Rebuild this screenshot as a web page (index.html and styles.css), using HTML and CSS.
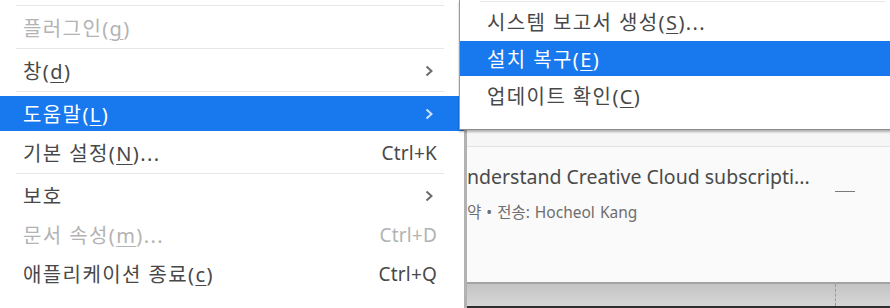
FILE: index.html
```html
<!DOCTYPE html>
<html lang="ko">
<head>
    <meta charset="UTF-8">
    <title>도움말 메뉴</title>
    <link rel="stylesheet" href="styles.css">
</head>
<body>

<!-- Main menu -->
<div class="menu">
    <div class="sep"></div>
    <div class="item disabled"><span>플러그인(<u>g</u>)</span></div>
    <div class="sep"></div>
    <div class="item">
        <span>창(<u>d</u>)</span>
        <svg class="chev" viewBox="0 0 8 12"><polyline points="1.5,1.5 6.5,6 1.5,10.5"/></svg>
    </div>
    <div class="sep"></div>
    <div class="item active">
        <span>도움말(<u>L</u>)</span>
        <svg class="chev" viewBox="0 0 8 12"><polyline points="1.5,1.5 6.5,6 1.5,10.5"/></svg>
    </div>
    <div class="item">
        <span>기본 설정(<u>N</u>)...</span>
        <span class="key">Ctrl+K</span>
    </div>
    <div class="sep"></div>
    <div class="item">
        <span>보호</span>
        <svg class="chev" viewBox="0 0 8 12"><polyline points="1.5,1.5 6.5,6 1.5,10.5"/></svg>
    </div>
    <div class="item disabled">
        <span>문서 속성(<u>m</u>)...</span>
        <span class="key">Ctrl+D</span>
    </div>
    <div class="item">
        <span>애플리케이션 종료(<u>c</u>)</span>
        <span class="key">Ctrl+Q</span>
    </div>
</div>

<!-- Document pane behind the menus -->
<div class="pane">
    <div class="pane-top"></div>
    <div class="card">
        <div class="card-text">
            <div class="card-title">nderstand Creative Cloud subscripti...</div>
            <div class="card-meta">약 • 전송: Hocheol Kang</div>
        </div>
        <div class="dash"></div>
    </div>
    <div class="status">
        <div class="status-main"></div>
        <div class="status-side"></div>
    </div>
</div>

<!-- Help submenu (overlays the main menu edge) -->
<div class="submenu">
    <div class="sep"></div>
    <div class="item"><span>시스템 보고서 생성(<u>S</u>)...</span></div>
    <div class="item active"><span>설치 복구(<u>E</u>)</span></div>
    <div class="item"><span>업데이트 확인(<u>C</u>)</span></div>
</div>

</body>
</html>
```

FILE: styles.css
```css
/* Page */
body {
    margin: 0;
    height: 308px;
    overflow: hidden;
    position: relative;
    display: flex;
    font-family: "Noto Sans", "Noto Sans CJK KR", sans-serif;
    color: #484848;
    background-color: #fafafa;
}

u {
    text-decoration-thickness: 1px;
    text-underline-offset: 3px;
}

/* Main menu */
.menu {
    width: 464px;
    flex-shrink: 0;
    background-color: #ffffff;
    display: flex;
    flex-direction: column;
    padding-top: 4px;
    box-sizing: border-box;
}

.sep {
    height: 1px;
    background-color: #e6e6e6;
    margin: 1px 20px 2px 16px;
    flex-shrink: 0;
}

.item {
    height: 35px;
    margin: 2px 0;
    padding: 0 27px 0 23px;
    display: flex;
    align-items: center;
    justify-content: space-between;
    font-size: 20px;
    letter-spacing: 1.4px;
    white-space: nowrap;
    flex-shrink: 0;
}

.item.active {
    background-color: #1878ee;
    color: #ffffff;
}

.item.disabled {
    color: #b3b3b3;
}

.key {
    font-size: 19px;
    letter-spacing: 0.2px;
}

.chev {
    width: 8px;
    height: 12px;
    margin-right: 4px;
    fill: none;
    stroke: #6b6b6b;
    stroke-width: 2;
}

.item.active .chev {
    stroke: #cfe2fb;
}

/* Submenu */
.submenu {
    position: absolute;
    top: 0;
    left: 459px;
    width: 440px;
    background-color: #ffffff;
    border-left: 1px solid #9a9a9a;
    border-bottom: 1px solid #8c8c8c;
    box-shadow: 0 2px 2px rgba(0, 0, 0, 0.28);
    padding-bottom: 14px;
}

.submenu .sep {
    margin: 1px 15px 2px 20px;
}

.submenu .item {
    padding-left: 27px;
}

/* Pane behind */
.pane {
    flex: 1;
    display: flex;
    flex-direction: column;
    border-left: 3px solid #b2b2b2;
    min-width: 0;
}

.pane-top {
    height: 146px;
    flex-shrink: 0;
    background-color: #f6f6f6;
    border-bottom: 1px solid #e3e3e3;
}

.card {
    flex: 1;
    display: flex;
    background-color: #fafafa;
}

.card-text {
    flex: 1;
    min-width: 0;
    padding-top: 17px;
    white-space: nowrap;
}

.card-title {
    font-size: 19.5px;
    line-height: 26px;
    color: #4a4a4a;
}

.card-meta {
    font-size: 15.5px;
    line-height: 20px;
    color: #6e6e6e;
    margin-top: 12px;
    word-spacing: 1px;
}

.dash {
    width: 20px;
    height: 1px;
    background-color: #7a7a7a;
    margin: 44px 35px 0 0;
}

.status {
    height: 22px;
    flex-shrink: 0;
    display: flex;
    border-top: 2px solid #a3a3a3;
    border-bottom: 2px solid #2e2e2e;
    background: linear-gradient(#c4c4c4, #d6d6d6);
}

.status-main {
    width: 368px;
}

.status-side {
    flex: 1;
    border-left: 1px dashed #9a9a9a;
}
```
